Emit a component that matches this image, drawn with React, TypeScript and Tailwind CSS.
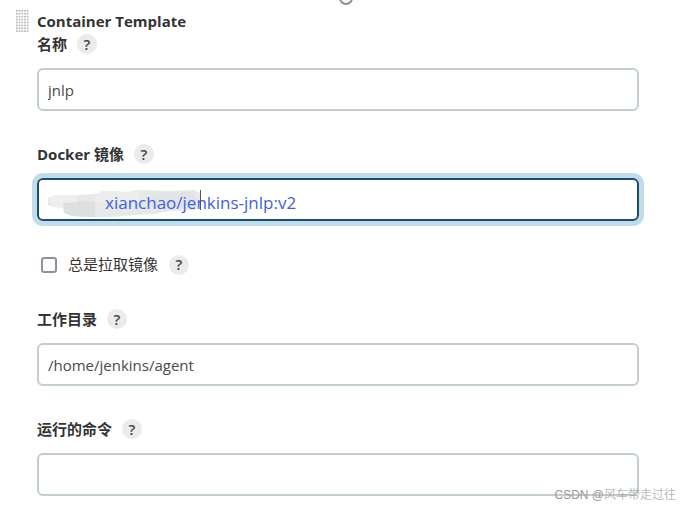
import type { ReactNode } from 'react';

function HelpButton({ label }: { label: string }) {
  return (
    <button
      type="button"
      aria-label={`Help: ${label}`}
      className="flex size-5 shrink-0 items-center justify-center rounded-full bg-[#ebebeb] text-[15px] font-semibold text-[#444]"
    >
      ?
    </button>
  );
}

const inputClass =
  'block h-[43px] w-full rounded-md border-2 border-[#c3cdd4] bg-white px-[9px] text-[15px] text-[#4a4a4a] outline-none';

function Field({ id, label, children }: { id: string; label: string; children: ReactNode }) {
  return (
    <div>
      <div className="mb-[13px] flex h-[22px] items-center gap-[10px]">
        <label htmlFor={id} className="text-[15px] font-bold">
          {label}
        </label>
        <HelpButton label={label} />
      </div>
      {children}
    </div>
  );
}

function DragHandle() {
  const rows = [0, 1, 2, 3, 4, 5, 6, 7];
  const cols = [0, 1, 2, 3, 4];

  return (
    <svg className="absolute top-[10px] left-4" width="13" height="24" aria-hidden="true">
      {rows.map((row) =>
        cols.map((col) => (
          <rect key={`${row}-${col}`} x={col * 2.7} y={row * 2.9} width="1.7" height="1.7" fill="#b8b8b8" />
        ))
      )}
    </svg>
  );
}

export default function App() {
  return (
    <main className="relative overflow-hidden bg-white pt-[10px] pr-[45px] pb-[11px] pl-[37px] font-['Open_Sans','Noto_Sans_CJK_SC',sans-serif] text-[#333]">
      <svg className="absolute top-0 left-[338px]" width="16" height="6" aria-hidden="true">
        <circle cx="8" cy="-2" r="6" fill="none" stroke="#8e8e8e" strokeWidth="2" />
      </svg>
      <DragHandle />

      <h2 className="mb-px text-[15px] leading-[22px] font-bold">Container Template</h2>

      <div className="flex flex-col gap-8">
        <Field id="name" label="名称">
          <input id="name" type="text" defaultValue="jnlp" className={inputClass} />
        </Field>

        <Field id="image" label="Docker 镜像">
          <div className="relative rounded-md bg-white ring-[5px] ring-[#c2dbe9]">
            {/* Smudge over the registry host */}
            <svg className="absolute top-3 left-[10px]" width="158" height="30" aria-hidden="true">
              <path
                d="M1 8 L9 5 L18 6 L31 5 L48 4 L56 1 L80 2 L92 0 L120 1 L148 0 L154 4 L154 16 L147 20 L123 21 L106 24 L88 25 L62 27 L43 27 L25 26 L17 23 L16 18 L7 17 L1 15 Z"
                fill="#e6e8ea"
              />
              <path d="M16 13 L30 11 L48 12 L48 27 L25 26 L18 23 Z" fill="#dddfe1" />
              <path d="M48 4 L56 1 L80 2 L92 1 L92 12 L48 13 Z" fill="#ebedef" />
              <path d="M1 8 L9 5 L31 5 L31 12 L16 13 L16 18 L7 17 Z" fill="#edefef" />
              <path d="M105 3 L146 2 L150 12 L138 17 L105 18 Z" fill="#e1e3e6" />
            </svg>
            <input
              id="image"
              type="text"
              defaultValue="xianchao/jenkins-jnlp:v2"
              className="relative block h-[43px] w-full rounded-md border-2 border-[#1b4e6e] bg-transparent pt-[6px] pr-[9px] pl-[66px] text-[17px] text-[#4361d8] outline-none"
            />
            <span className="absolute top-3 left-[163px] h-5 w-px bg-[#555]" />
          </div>
        </Field>

        <div className="flex h-[23px] items-center pl-1">
          <input
            id="always-pull"
            type="checkbox"
            className="mr-[11px] size-4 appearance-none rounded-[3px] border-2 border-[#8f8f9d] bg-white"
          />
          <label htmlFor="always-pull" className="mr-[11px] text-[15px]">
            总是拉取镜像
          </label>
          <HelpButton label="总是拉取镜像" />
        </div>

        <Field id="workdir" label="工作目录">
          <input id="workdir" type="text" defaultValue="/home/jenkins/agent" className={inputClass} />
        </Field>

        <Field id="command" label="运行的命令">
          <input id="command" type="text" className={inputClass} />
        </Field>
      </div>

      <span className="absolute right-2 bottom-1 font-['Liberation_Sans','Noto_Sans_CJK_SC',sans-serif] text-xs font-light text-[#999]">
        CSDN @风车带走过往
      </span>
    </main>
  );
}
